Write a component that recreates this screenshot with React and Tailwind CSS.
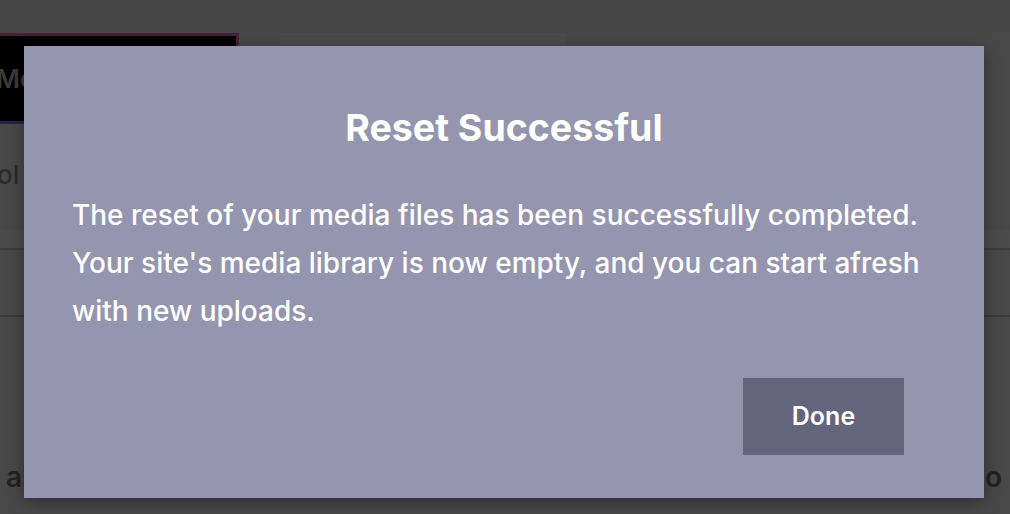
export default function App() {
  return (
    <div className="relative w-[1010px] h-[514px] overflow-hidden bg-[#484848] font-['Inter',sans-serif]">
      {/* dimmed page behind */}
      <div className="flex flex-col">
        <div className="h-[33px] bg-[#474747]" />
        <div className="flex items-start gap-[41px] h-[91px]">
          <div className="w-[239px] h-[91px] bg-black border-t-[3px] border-r-[3px] border-[#4a2039] border-b-[3px] border-b-[#24234a] flex items-center overflow-hidden">
            <span className="-ml-[4px] text-[26px] font-semibold text-[#3c3c3c] leading-none">Media</span>
          </div>
          <div className="w-[285px] h-[20px] bg-[#4b4b4b]" />
        </div>
        <div className="h-[106px] pt-[36px] overflow-hidden">
          <span className="block -ml-[3px] text-[26px] font-medium text-[#2b2b2b] leading-[30px]">ol</span>
        </div>
        <div className="h-[20px] bg-[#4b4b4b] border-b-2 border-[#3a3a3a]" />
        <div className="h-[67px] bg-[#484848] border-b-2 border-[#3a3a3a]" />
        <div className="h-[197px] pt-[147px] flex justify-between items-start">
          <span className="ml-[6px] text-[28px] font-semibold text-[#232323] leading-[26px]">ab</span>
          <span className="mr-[8px] text-[28px] font-semibold text-[#232323] leading-[26px]">do</span>
        </div>
      </div>

      {/* modal */}
      <div className="absolute left-[24px] top-[46px] w-[960px] h-[452px] bg-[#9595b0] shadow-[0_4px_16px_rgba(0,0,0,0.35)] flex flex-col px-[48px] pt-[60px]">
        <h2 className="text-center text-[37.5px] font-bold text-white leading-[44px]">Reset Successful</h2>
        <p className="mt-[41px] text-[28px] font-medium text-white leading-[48px]">
          The reset of your media files has been successfully completed. Your site's media library is now empty, and you can start afresh with new uploads.
        </p>
        <div className="flex justify-end mt-[43px] pr-[32px]">
          <button className="w-[161px] h-[77px] bg-[#64647c] text-white text-[25px] font-semibold">Done</button>
        </div>
      </div>
    </div>
  );
}
